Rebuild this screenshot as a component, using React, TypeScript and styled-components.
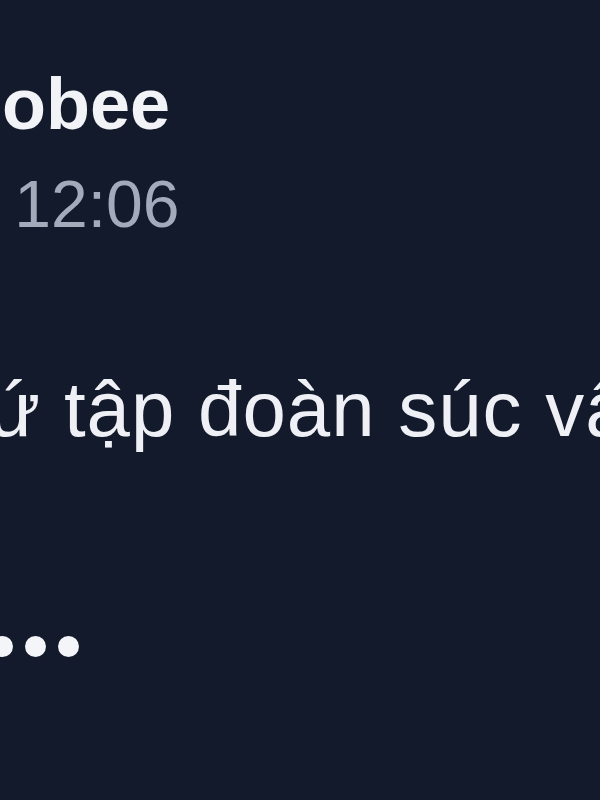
import styled, { createGlobalStyle } from 'styled-components';

const Global = createGlobalStyle`
    html, body {
        margin: 0;
        padding: 0;
        background: #131a2b;
    }
`;

const Page = styled.div`
    width: 600px;
    height: 800px;
    overflow: hidden;
    background: #131a2b;
    font-family: "Liberation Sans", Arial, sans-serif;
    display: flex;
    flex-direction: column;
    white-space: nowrap;
`;

const Name = styled.div<{ $shift: number }>`
    margin: 64px 0 0 ${p => p.$shift}px;
    font-size: 72px;
    font-weight: 700;
    line-height: 80px;
    color: #f1f3f7;
`;

const Time = styled.div<{ $shift: number }>`
    margin: 25px 0 0 ${p => p.$shift}px;
    font-size: 66px;
    line-height: 70px;
    color: #a3abba;
`;

const Message = styled.div<{ $shift: number }>`
    margin: 128px 0 0 ${p => p.$shift}px;
    font-size: 78px;
    letter-spacing: 1px;
    line-height: 84px;
    color: #eef0f5;
`;

const Typing = styled.div<{ $shift: number }>`
    display: flex;
    gap: 12px;
    margin: 185px 0 0 ${p => p.$shift}px;
`;

const Dot = styled.span`
    width: 21px;
    height: 21px;
    border-radius: 50%;
    background: #f4f5f9;
`;

const App = () => {
    return (
        <Page>
            <Global />
            <Name $shift={-50}>Bobee</Name>
            <Time $shift={-26}>· 12:06</Time>
            <Message $shift={-105}>Thứ tập đoàn súc vật</Message>
            <Typing $shift={-8}>
                <Dot />
                <Dot />
                <Dot />
            </Typing>
        </Page>
    );
};

export default App;
